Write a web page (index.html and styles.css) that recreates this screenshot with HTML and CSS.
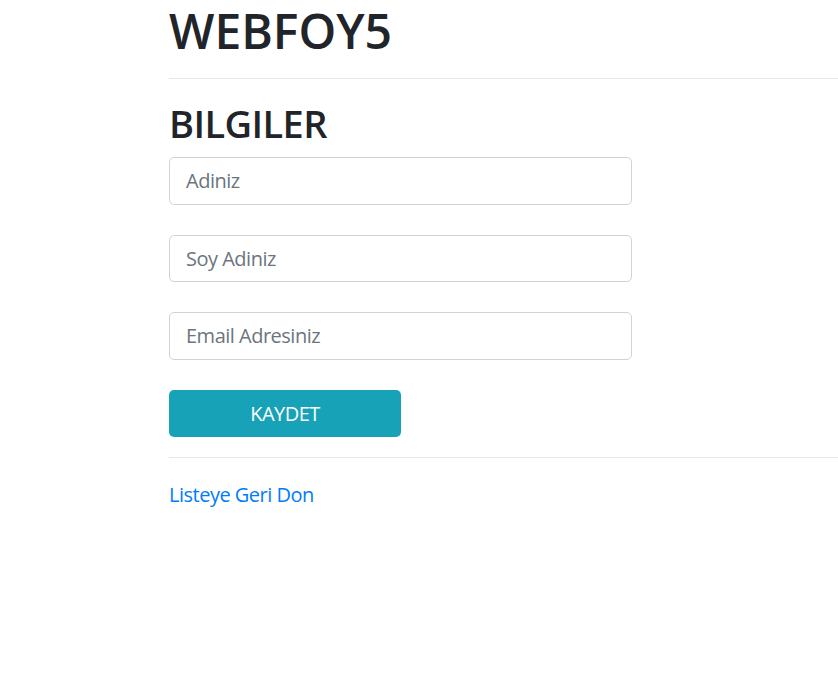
FILE: index.html
```html
<!DOCTYPE html>
<html lang="tr">
<head>
<meta charset="utf-8">
<title>WEBFOY5</title>
<link rel="stylesheet" href="styles.css">
</head>
<body>
<div class="page">
  <h1 class="title">WEBFOY5</h1>
  <hr class="rule rule-top">
  <h2 class="section">BILGILER</h2>
  <form class="form">
    <input class="field" type="text" placeholder="Adiniz">
    <input class="field" type="text" placeholder="Soy Adiniz">
    <input class="field" type="email" placeholder="Email Adresiniz">
    <button class="btn" type="button">KAYDET</button>
  </form>
  <hr class="rule rule-bottom">
  <a class="back" href="#">Listeye Geri Don</a>
</div>
</body>
</html>
```

FILE: styles.css
```css
html, body {
  margin: 0;
  padding: 0;
  background: #fff;
}
body {
  font-family: "Open Sans", "Noto Sans", "Liberation Sans", sans-serif;
  color: #212529;
  font-size: 20px;
}
.page {
  padding-left: 169px;
  display: flex;
  flex-direction: column;
  align-items: flex-start;
}
.title {
  margin: 0;
  padding-top: 1px;
  font-size: 48px;
  font-weight: 600;
  line-height: 59px;
  letter-spacing: 0;
}
.rule {
  align-self: stretch;
  border: 0;
  border-top: 1px solid #e6e6e6;
  height: 0;
  margin: 0;
}
.rule-top {
  margin-top: 18px;
}
.section {
  margin: 21px 0 0 0;
  font-size: 38px;
  font-weight: 600;
  line-height: 47px;
  letter-spacing: -0.6px;
}
.form {
  display: flex;
  flex-direction: column;
  align-items: flex-start;
  gap: 30px;
  margin-top: 10px;
}
.field {
  box-sizing: border-box;
  width: 463px;
  height: 47.5px;
  border: 1px solid #ced4da;
  border-radius: 5px;
  padding: 0 16px;
  font-family: inherit;
  font-size: 20px;
  letter-spacing: -0.5px;
  color: #495057;
}
.field::placeholder {
  color: #6c757d;
}
.btn {
  box-sizing: border-box;
  width: 232px;
  height: 47.5px;
  border: 0;
  border-radius: 5px;
  background: #17a2b8;
  color: #fff;
  font-family: inherit;
  font-size: 20px;
  letter-spacing: -0.5px;
  padding: 0;
}
.rule-bottom {
  margin-top: 20px;
}
.back {
  margin-top: 22px;
  color: #007bff;
  text-decoration: none;
  font-size: 20px;
  line-height: 30px;
  letter-spacing: -0.5px;
}
```
